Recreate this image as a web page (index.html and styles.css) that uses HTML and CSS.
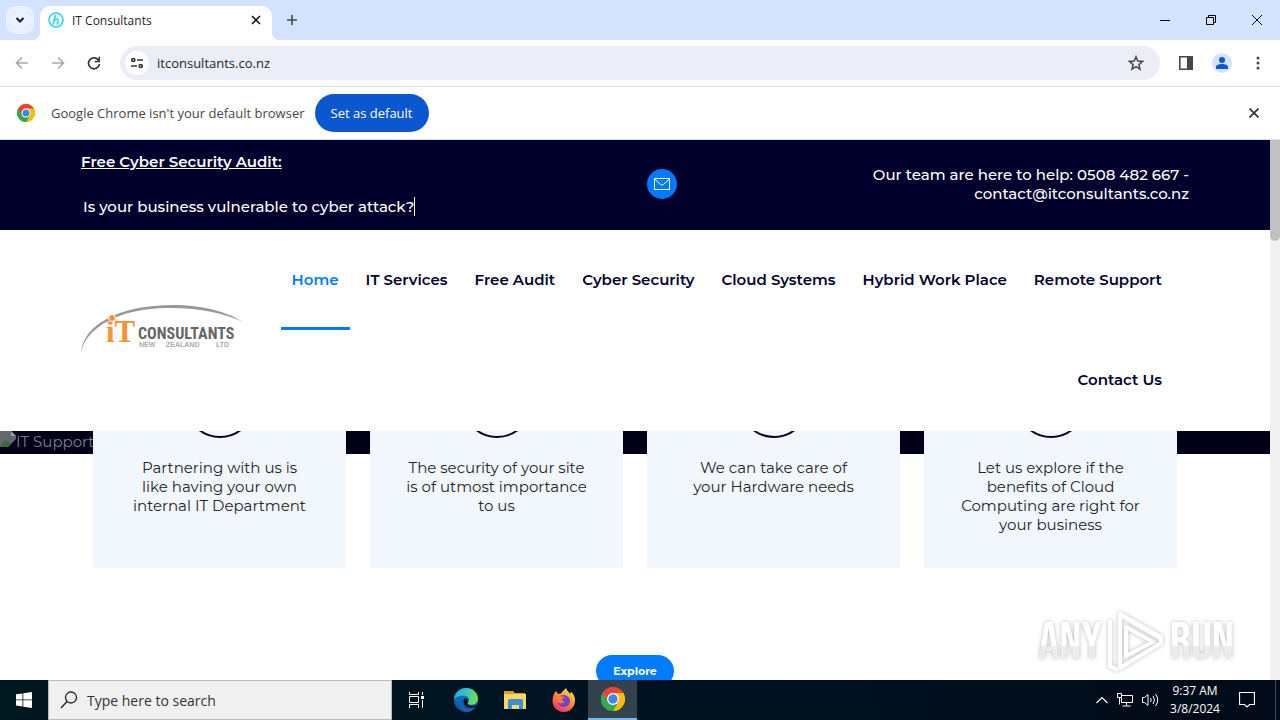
FILE: index.html
```html
<!DOCTYPE html>
<html lang="en">
<head>
    <meta charset="UTF-8">
    <meta name="viewport" content="width=device-width, initial-scale=1.0">
    <title>IT Consultants</title>
    <link rel="stylesheet" href="styles.css">
</head>
<body>
    <svg width="0" height="0" class="defs" aria-hidden="true">
        <symbol id="chrome-logo" viewBox="0 0 24 24">
            <circle cx="12" cy="12" r="12" fill="#34a853"/>
            <path d="M1.6 6A12 12 0 0 1 22.4 6L12 6.5 6.8 15Z" fill="#ea4335"/>
            <path d="M22.4 6A12 12 0 0 1 12 24L17.2 15 16.500 8.500 12 6Z" fill="#fbbc05"/>
            <path d="M1.6 6A12 12 0 0 0 12 24L17.2 15 6.800 15Z" fill="#34a853"/>
            <circle cx="12" cy="12" r="6" fill="#fff"/>
            <circle cx="12" cy="12" r="4.700" fill="#4285f4"/>
        </symbol>
    </svg>

    <!-- tab strip -->
    <header class="tab-strip">
        <button class="tab-search" aria-label="Search tabs">
            <svg width="10" height="10" viewBox="0 0 10 10"><path d="M1.500 3 5 6.500 8.500 3" fill="none" stroke="#1f1f1f" stroke-width="2"/></svg>
        </button>
        <div class="tab">
            <svg width="16" height="16" viewBox="0 0 16 16"><circle cx="8" cy="8" r="7" fill="#e9fbfe" stroke="#35d0ea" stroke-width="1.600"/><path d="M7.500 3 5 12.500M6 9c1-2 4.600-3 4 0l-.8 3.500" fill="none" stroke="#35d0ea" stroke-width="1.500"/></svg>
            <span class="tab-title">IT Consultants</span>
            <button aria-label="Close tab">
                <svg width="10" height="10" viewBox="0 0 10 10"><path d="m1 1 8 8M9 1 1 9" stroke="#1f1f1f" stroke-width="1.600"/></svg>
            </button>
        </div>
        <button class="new-tab" aria-label="New tab">
            <svg width="12" height="12" viewBox="0 0 12 12"><path d="M6 1v10M1 6h10" stroke="#474747" stroke-width="1.600"/></svg>
        </button>
        <div class="window-buttons">
            <button aria-label="Minimize"><svg width="10" height="10" viewBox="0 0 10 10"><path d="M0 5.500h10" stroke="#000"/></svg></button>
            <button aria-label="Restore"><svg width="10" height="10" viewBox="0 0 10 10"><path d="M.5 2.500h7v7h-7zM2.500 2.500v-2h7v7h-2" fill="none" stroke="#000"/></svg></button>
            <button aria-label="Close"><svg width="10" height="10" viewBox="0 0 10 10"><path d="m0 0 10 10M10 0 0 10" stroke="#000"/></svg></button>
        </div>
    </header>

    <!-- toolbar -->
    <div class="toolbar">
        <button aria-label="Back"><svg width="14" height="14" viewBox="0 0 14 14"><path d="M13 7H2M7 1.500 1.500 7 7 12.500" fill="none" stroke="#a9a9a9" stroke-width="1.600"/></svg></button>
        <button aria-label="Forward"><svg width="14" height="14" viewBox="0 0 14 14"><path d="M1 7h11M7 1.500 12.500 7 7 12.500" fill="none" stroke="#a9a9a9" stroke-width="1.600"/></svg></button>
        <button aria-label="Reload"><svg width="14" height="14" viewBox="0 0 14 14"><path d="M11.800 4.500A5.500 5.500 0 1 0 12.500 8" fill="none" stroke="#333" stroke-width="1.700"/><path d="M13 .8v5.400H7.600V4.700h3.900V.8z" fill="#333"/></svg></button>
        <div class="address-bar">
            <button class="site-info" aria-label="View site information">
                <svg width="12" height="12" viewBox="0 0 12 12"><g fill="none" stroke="#333" stroke-width="1.700"><circle cx="2.300" cy="3" r="1.500"/><path d="M6 3h6M0 9h6"/><circle cx="9.700" cy="9" r="1.500"/></g></svg>
            </button>
            <input type="text" value="itconsultants.co.nz" aria-label="Address">
            <button class="bookmark" aria-label="Bookmark this tab">
                <svg width="16" height="16" viewBox="0 0 16 16"><path d="m8 1.800 1.800 4.300 4.700.4-3.600 3.100 1.100 4.600L8 11.700l-4 2.500 1.100-4.600-3.600-3.100 4.700-.4z" fill="none" stroke="#474747" stroke-width="1.500"/></svg>
            </button>
        </div>
        <button class="side-panel" aria-label="Side panel"><svg width="16" height="16" viewBox="0 0 16 16"><path d="M1.800 1.800h12.400v12.400H1.800z" fill="none" stroke="#474747" stroke-width="1.600"/><path d="M9 1h6v14H9z" fill="#474747"/></svg></button>
        <button aria-label="Profile"><svg width="20" height="20" viewBox="0 0 20 20"><circle cx="10" cy="10" r="10" fill="#d3e3fd"/><circle cx="10" cy="7" r="3" fill="#0b57d0"/><path d="M4 16v-2c0-4 12-4 12 0v2z" fill="#0b57d0"/></svg></button>
        <button aria-label="Menu"><svg width="4" height="14" viewBox="0 0 4 14" fill="#474747"><circle cx="2" cy="2" r="1.500"/><circle cx="2" cy="7" r="1.500"/><circle cx="2" cy="12" r="1.500"/></svg></button>
    </div>

    <div class="infobar">
        <svg class="infobar-icon" width="18" height="18"><use href="#chrome-logo"/></svg>
        <span>Google Chrome isn't your default browser</span>
        <button class="set-default">Set as default</button>
        <button class="dismiss" aria-label="Dismiss"><svg width="10" height="10" viewBox="0 0 10 10"><path d="m.5.5 9 9M9.500.5l-9 9" stroke="#333" stroke-width="1.700"/></svg></button>
    </div>

    <!-- web page -->
    <div class="viewport">
        <main class="site">
            <div class="top-bar">
                <div class="container top-bar-row">
                    <div class="audit">
                        <strong>Free Cyber Security Audit:</strong>
                        <span class="typed">Is your business vulnerable to cyber attack?</span>
                    </div>
                    <div class="contact">
                        <a class="mail" href="#mail" aria-label="Email us">
                            <svg width="16" height="14" viewBox="0 0 16 14"><path d="M.5 1.500h15v11H.5zM.5 2l6 5.500q1.500 1.200 3 0l6-5.500" fill="none" stroke="#fff"/></svg>
                        </a>
                        <p>Our team are here to help: 0508 482 667 - contact@itconsultants.co.nz</p>
                    </div>
                </div>
            </div>

            <div class="container site-header">
                <a class="logo" href="#home" aria-label="IT Consultants New Zealand Ltd">
                    <svg width="162" height="50" viewBox="0 0 162 50">
                        <path d="M0 49C1 20 38 0 92 0c30 0 55 7 70 17C145 9 120 3 90 3 42 2 3 22 0 49z" fill="#999"/>
                        <text x="25" y="37" class="logo-it">iT</text>
                        <circle cx="31" cy="13" r="3.500" fill="#f79334" stroke="#fff"/>
                        <text x="57" y="34" class="logo-name">CONSULTANTS</text>
                        <text x="58" y="42" class="logo-sub">NEW</text>
                        <text x="85" y="42" class="logo-sub">ZEALAND</text>
                        <text x="135" y="42" class="logo-sub">LTD</text>
                    </svg>
                </a>
                <nav class="menu">
                    <a class="active" href="#home">Home</a>
                    <a href="#services">IT Services</a>
                    <a href="#audit">Free Audit</a>
                    <a href="#security">Cyber Security</a>
                    <a href="#cloud">Cloud Systems</a>
                    <a href="#hybrid">Hybrid Work Place</a>
                    <a href="#remote">Remote Support</a>
                    <a href="#contact">Contact Us</a>
                </nav>
            </div>

            <section class="features">
                <div class="slide-alt">
                    <svg width="16" height="16" viewBox="0 0 16 16"><path d="M0 0h11l5 5v3L8 16H0z" fill="#62686c"/><path d="m11 0 5 5h-5z" fill="#9a9fa4"/><path d="M1 14q5-8 10-1l-3 3H1z" fill="#386b35"/></svg>
                    <span>IT Support</span>
                </div>
                <div class="container cards">
                    <article class="card"><p>Partnering with us is like having your own internal IT Department</p></article>
                    <article class="card"><p>The security of your site is of utmost importance to us</p></article>
                    <article class="card"><p>We can take care of your Hardware needs</p></article>
                    <article class="card"><p>Let us explore if the benefits of Cloud Computing are right for your business</p></article>
                </div>
            </section>
            <div class="explore-row">
                <button class="explore">Explore</button>
            </div>
        </main>
        <div class="scrollbar"><div class="thumb"></div></div>

        <div class="watermark">
            <span>ANY</span>
            <svg width="60" height="64" viewBox="0 0 60 64"><g fill="none" stroke="#fff" stroke-width="4" stroke-linejoin="round"><path d="M14 50V4l41 23v6L14 58z"/><path d="M20 46V17l27 15zM4 10v46l8 4M14 5l40 23"/></g></svg>
            <span>RUN</span>
        </div>
    </div>

    <!-- windows taskbar -->
    <footer class="taskbar">
        <button class="start" aria-label="Start"><svg width="16" height="16" viewBox="0 0 16 16" fill="#fff"><path d="M0 2.300 6.500 1.400v6.100H0zM7.300 1.300 16 0v7.500H7.300zM0 8.300h6.500v6.200L0 13.600zM7.300 8.300H16V16l-8.700-1.300z"/></svg></button>
        <label class="search">
            <svg width="18" height="18" viewBox="0 0 18 18"><g fill="none" stroke="#222" stroke-width="1.300"><circle cx="11" cy="6.500" r="5.500"/><path d="m7 10.500-6 6.500"/></g></svg>
            <input type="text" placeholder="Type here to search" aria-label="Search">
        </label>
        <div class="apps">
            <button aria-label="Task View"><svg width="18" height="16" viewBox="0 0 18 16"><path d="M1.500 0v2.500h9V0M1.500 4.500h9v6h-9zM1.500 16v-3.500h9V16M14.500 0v3M14.500 8v8" fill="none" stroke="#fff"/><path d="M13 4h3v3h-3z" fill="#fff"/></svg></button>
            <button aria-label="Edge"><svg width="24" height="24" viewBox="0 0 24 24">
                <defs>
                    <linearGradient id="edge-top" x1="0" y1="0" x2="1" y2=".3"><stop offset="0" stop-color="#2aa5e0"/><stop offset=".5" stop-color="#32c3c4"/><stop offset="1" stop-color="#68dc58"/></linearGradient>
                    <linearGradient id="edge-base" x1="0" y1="0" x2="0" y2="1"><stop offset="0" stop-color="#1683d2"/><stop offset="1" stop-color="#0d4b9b"/></linearGradient>
                </defs>
                <circle cx="12" cy="12" r="12" fill="url(#edge-base)"/>
                <path d="M0 11C1 4 6 0 12 0c7 0 12 5 12 10.500 0 5-4 6.500-8 6.300-2.500-.1-3-1.300-2-2.500C18 9 9 4 0 11z" fill="url(#edge-top)"/>
                <path d="M9 11c-4 7 4 13 13 7.500C20 21 17 24 12.500 24 5 23 4 14 9 11z" fill="#1b5fae"/>
                <path d="M10 11c-2 5 2 9 7 9 2.500 0 4-.8 5.500-1.500.8-.4 1.500.3 1 1l1-3C21 18 16 18 14 16.500c-.8-.8-.5-1.400 0-2.200 1-3-2.500-5.300-4-3.300z" fill="#04131d"/>
            </svg></button>
            <button aria-label="File Explorer"><svg width="22" height="20" viewBox="0 0 22 20"><path d="M0 1h9l2 2h10v5H0z" fill="#d99f24"/><path d="M0 4h22v15H0z" fill="#fbd665"/><path d="M4 19v-8q0-2 2-2h11q2 0 2 2v8h-4v-4H8v4z" fill="#3c91d2"/></svg></button>
            <button aria-label="Firefox"><svg width="24" height="24" viewBox="0 0 24 24">
                <defs><linearGradient id="fox" x1=".8" y1="0" x2=".2" y2="1"><stop offset="0" stop-color="#ffe24a"/><stop offset=".45" stop-color="#ff9030"/><stop offset="1" stop-color="#f0256f"/></linearGradient></defs>
                <path d="M4 3 6 6l3-.5C10 3 13 2 14 0c1 3 3 4 4.500 6l.5-2.500c3 3 4.500 6 4 10C22.500 19 18 24 12 24 5 24 .5 19 .5 13 .5 9 2 5 4 3z" fill="url(#fox)"/>
                <path d="M8 8c3-2 9-1 10 4 .5 4-2.500 7-6 7-4 0-6.500-3-6-5 2 1.500 5 1.500 6-1-2 0-4-1-3-2.500L8 8z" fill="#7542c9"/>
                <path d="M5 8c2-1 4 0 5 .5 1.800 0 2.500.5 2.500 1L10 11c-.5 2 1 2.500 2.500 2.300C11 16 8 15.500 6 14z" fill="#ff7b2d"/>
            </svg></button>
            <button class="running" aria-label="Chrome"><svg width="24" height="24"><use href="#chrome-logo"/></svg></button>
        </div>
        <div class="tray">
            <svg width="12" height="8" viewBox="0 0 12 8"><path d="M.5 7 6 1.500 11.500 7" fill="none" stroke="#fff" stroke-width="1.200"/></svg>
            <svg width="16" height="14" viewBox="0 0 16 14"><path d="M5 2.500h10.500v7H4.500V5M.5.500h4v4h-4zM2.500 4.500v7M9.500 9.500v3M5.500 13h8" fill="none" stroke="#fff"/></svg>
            <svg width="17" height="14" viewBox="0 0 17 14"><path d="M.5 4.500h2L6 1.500v11l-3.500-3h-2zM8.500 5q1.500 2 0 4M11 3q3 4 0 8M13.500 1q4.500 6 0 12" fill="none" stroke="#fff"/></svg>
            <div class="clock"><span>9:37 AM</span><span>3/8/2024</span></div>
            <svg width="16" height="16" viewBox="0 0 16 16"><path d="M.5.500h15v12h-5L8 15l-2.500-2.500h-5z" fill="none" stroke="#fff" stroke-width="1.200"/></svg>
            <div class="show-desktop"></div>
        </div>
    </footer>
</body>
</html>
```
FILE: styles.css
```css
*,
*::before,
*::after {
    box-sizing: border-box;
}

body {
    display: flex;
    flex-direction: column;
    height: 100vh;
    margin: 0;
    overflow: hidden;
    font-family: "Open Sans", "Noto Sans", sans-serif;
    background-color: #fff;
}

button {
    display: flex;
    align-items: center;
    justify-content: center;
    padding: 0;
    border: none;
    background: none;
    font-family: inherit;
    cursor: pointer;
}

svg {
    flex: none;
    display: block;
}

p {
    margin: 0;
}

a {
    text-decoration: none;
}

.defs {
    position: absolute;
}

/* tab strip */
.tab-strip {
    display: flex;
    flex: none;
    height: 40px;
    padding-left: 6px;
    background-color: #d3e3fd;
}

.tab-search {
    width: 28px;
    height: 28px;
    margin-top: 6px;
    border-radius: 10px;
    background-color: #e9f1fe;
}

.tab {
    position: relative;
    display: flex;
    align-items: center;
    gap: 8px;
    width: 232px;
    height: 34px;
    margin: 6px 0 0 6px;
    padding: 0 11px 6px 8px;
    border-radius: 10px 10px 0 0;
    background-color: #fff;
    font-size: 12px;
    color: #1f1f1f;
}

/* curved feet of the active tab */
.tab::before,
.tab::after {
    content: "";
    position: absolute;
    bottom: 0;
    width: 8px;
    height: 8px;
}

.tab::before {
    right: 100%;
    background: radial-gradient(circle at 0 0, transparent 8px, #fff 8px);
}

.tab::after {
    left: 100%;
    background: radial-gradient(circle at 100% 0, transparent 8px, #fff 8px);
}

.tab-title {
    flex: 1;
}

.new-tab {
    width: 40px;
}

.window-buttons {
    display: flex;
    margin-left: auto;
}

.window-buttons button {
    width: 46px;
}

/* toolbar */
.toolbar {
    display: flex;
    flex: none;
    align-items: center;
    gap: 8px;
    height: 47px;
    padding: 0 8px;
    border-bottom: 1px solid #dfe1e6;
}

.toolbar > button {
    width: 28px;
    height: 28px;
}

.address-bar {
    display: flex;
    flex: 1;
    align-items: center;
    height: 34px;
    margin: 0 4px;
    padding: 0 12px 0 5px;
    border-radius: 17px;
    background-color: #ebeef7;
}

.site-info {
    width: 24px;
    height: 24px;
    border-radius: 50%;
    background-color: #fff;
}

.address-bar input {
    flex: 1;
    margin-left: 8px;
    padding: 0;
    border: none;
    background: none;
    font: 13px "Open Sans", sans-serif;
    color: #1f1f1f;
}

.bookmark {
    width: 24px;
}

/* default browser message */
.infobar {
    display: flex;
    flex: none;
    align-items: center;
    gap: 10px;
    height: 53px;
    padding: 0 21px 0 17px;
    border-bottom: 1px solid #d5deea;
    font-size: 13px;
    color: #474747;
}

.infobar-icon {
    margin-right: 6px;
}

.set-default {
    height: 38px;
    padding: 0 16px;
    border-radius: 19px;
    background-color: #0b57d0;
    font-size: 13px;
    color: #fff;
}

.dismiss {
    margin-left: auto;
}

/* page */
.viewport {
    position: relative;
    display: flex;
    flex: 1;
    min-height: 0;
    overflow: hidden;
}

.site {
    flex: 1;
    font-family: Montserrat, Inter, sans-serif;
    font-size: 15px;
    line-height: 19px;
    color: #212529;
}

.container {
    width: 100%;
    max-width: 1132px;
    margin: 0 auto;
    padding: 0 12px;
}

.top-bar {
    background-color: #00002c;
    font-weight: 500;
    color: #fff;
}

.top-bar-row {
    display: grid;
    grid-template-columns: 1fr 1fr;
    gap: 24px;
    align-items: center;
    height: 90px;
    padding-bottom: 2px;
}

.audit {
    display: flex;
    flex-direction: column;
    align-items: flex-start;
    gap: 26px;
}

.audit strong {
    font-weight: 600;
    text-decoration: underline;
}

.typed {
    margin-left: 2px;
    border-right: 1px solid #fff;
}

.contact {
    display: flex;
    align-items: center;
    justify-content: space-between;
}

.contact p {
    max-width: 330px;
    text-align: right;
}

.mail {
    display: flex;
    align-items: center;
    justify-content: center;
    width: 30px;
    height: 30px;
    border-radius: 50%;
    background-color: #007bff;
}

.site-header {
    display: flex;
    align-items: center;
    justify-content: space-between;
}

.logo-it {
    font: bold 31px "Liberation Serif", serif;
    fill: #f79334;
}

.logo-name {
    font: bold 16px "Roboto Condensed", "Liberation Sans Narrow", sans-serif;
    fill: #666;
}

.logo-sub {
    font: bold 7px "Liberation Sans", sans-serif;
    fill: #aaa;
}

.menu {
    display: flex;
    flex: 1;
    flex-wrap: wrap;
    justify-content: flex-end;
    column-gap: 5px;
    margin: 0 16px 0 16px;
}

.menu a {
    position: relative;
    padding: 0 11px;
    font-weight: 600;
    line-height: 100px;
    color: #00002c;
}

.menu .active {
    color: #007bff;
}

.menu .active::after {
    content: "";
    position: absolute;
    left: 0;
    right: 0;
    bottom: 0;
    height: 3px;
    background-color: #007bff;
}

.features {
    position: relative;
    margin-top: 1px;
    background: linear-gradient(#000016, #000016) no-repeat top / 100% 23px;
}

.slide-alt {
    position: absolute;
    top: 0;
    left: 0;
    display: flex;
    height: 23px;
    line-height: 22px;
    color: #808088;
}

.cards {
    display: grid;
    grid-template-columns: repeat(4, 1fr);
    gap: 24px;
    padding: 0 24px;
}

.card {
    position: relative;
    min-height: 137px;
    padding: 27px 36px;
    overflow: hidden;
    background-color: #f2f7fe;
    text-align: center;
}

/* lower edge of the round icon frame */
.card::before {
    content: "";
    position: absolute;
    top: -63px;
    left: 50%;
    width: 70px;
    height: 70px;
    margin-left: -35px;
    border: 2px solid #00002c;
    border-radius: 50%;
}

.explore-row {
    display: flex;
    justify-content: center;
    padding-top: 87px;
}

.explore {
    height: 32px;
    padding: 0 17px;
    border-radius: 16px;
    background-color: #007bff;
    font-size: 11px;
    font-weight: 700;
    color: #fff;
}

.scrollbar {
    width: 10px;
    background-color: #f1f1f1;
}

.thumb {
    height: 101px;
    border-radius: 0 0 5px 5px;
    background-color: #c1c1c1;
}

.watermark {
    position: absolute;
    right: 46px;
    bottom: 6px;
    display: flex;
    align-items: center;
    gap: 4px;
    font: 52px "Bebas Neue", "Roboto Condensed", "Liberation Sans Narrow", sans-serif;
    color: #fff;
    filter: drop-shadow(0 0 2px #bbb);
}

.watermark span {
    background: linear-gradient(#fff 55%, #ececec 55%);
    background-clip: text;
    color: transparent;
}

/* taskbar */
.taskbar {
    display: flex;
    flex: none;
    height: 40px;
    background: linear-gradient(90deg, #001820, #001220 50%, #000a18);
    color: #fff;
}

.start {
    width: 48px;
}

.search {
    display: flex;
    align-items: center;
    gap: 9px;
    width: 344px;
    padding: 0 11px;
    border: 1px solid #bbb;
    background-color: #f0f0f0;
}

.search input {
    flex: 1;
    min-width: 0;
    padding: 0;
    border: none;
    background: none;
    font: 14px "Open Sans", sans-serif;
}

.search input::placeholder {
    color: #333;
    opacity: 1;
}

.apps {
    display: flex;
}

.apps button {
    width: 49px;
}

.apps .running {
    border-bottom: 2px solid #76b9ed;
    background-color: #33424c;
}

.tray {
    display: flex;
    align-items: center;
    gap: 9px;
    margin-left: auto;
}

.clock {
    display: flex;
    flex-direction: column;
    width: 54px;
    margin-right: 8px;
    font-size: 12px;
    line-height: 18px;
    text-align: center;
    white-space: nowrap;
}

.show-desktop {
    width: 5px;
    height: 40px;
    margin-left: 11px;
    border-left: 1px solid #445;
}
```
